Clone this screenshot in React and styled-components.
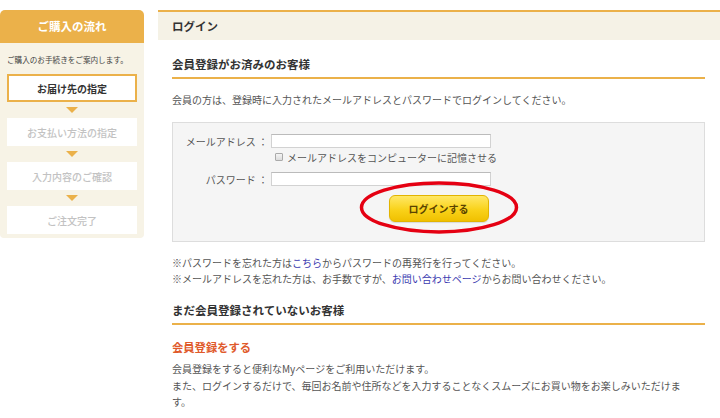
import React from "react";
import styled, { createGlobalStyle } from "styled-components";

const orange = "#ebb14a";
const cream = "#f7f3e6";

const GlobalStyle = createGlobalStyle`
  html, body {
    margin: 0;
    padding: 0;
    background: #fff;
    overflow: hidden;
  }
  body {
    font-family: "Noto Sans CJK JP", "Noto Sans", sans-serif;
    color: #555;
  }
`;

const steps = [
  { label: "お届け先の指定", active: true },
  { label: "お支払い方法の指定" },
  { label: "入力内容のご確認" },
  { label: "ご注文完了" },
];

const App = () => {
  return (
    <>
      <GlobalStyle />
      <Page>
        {/* SIDEBAR */}
        <Sidebar>
          <SidebarTitle>ご購入の流れ</SidebarTitle>
          <SidebarBody>
            <Lead>ご購入のお手続きをご案内します。</Lead>
            {steps.map((step, index) => (
              <React.Fragment key={index}>
                {index > 0 && (
                  <Arrow>
                    <span />
                  </Arrow>
                )}
                <Step $active={step.active}>{step.label}</Step>
              </React.Fragment>
            ))}
          </SidebarBody>
        </Sidebar>
        {/* SIDEBAR ENDS */}

        <Main>
          <PageTitle>ログイン</PageTitle>
          <Content>
            <SectionTitle>会員登録がお済みのお客様</SectionTitle>
            <Text>
              会員の方は、登録時に入力されたメールアドレスとパスワードでログインしてください。
            </Text>

            {/* LOGIN FORM */}
            <LoginBox>
              <FormRow>
                <Label>メールアドレス ：</Label>
                <Field type="text" />
              </FormRow>
              <CheckRow>
                <Check type="checkbox" />
                <span>メールアドレスをコンピューターに記憶させる</span>
              </CheckRow>
              <FormRow $space={6}>
                <Label>パスワード ：</Label>
                <Field type="password" />
              </FormRow>
              <ButtonRow>
                <ButtonWrap>
                  <LoginButton type="button">ログインする</LoginButton>
                  <Circle viewBox="0 0 160 54" aria-hidden="true">
                    <ellipse
                      cx="80"
                      cy="27"
                      rx="77.5"
                      ry="24.5"
                      fill="none"
                      stroke="#e50012"
                      strokeWidth="3.5"
                    />
                  </Circle>
                </ButtonWrap>
              </ButtonRow>
            </LoginBox>
            {/* LOGIN FORM ENDS */}

            <Notes>
              <li>
                ※パスワードを忘れた方は<a href="#">こちら</a>
                からパスワードの再発行を行ってください。
              </li>
              <li>
                ※メールアドレスを忘れた方は、お手数ですが、
                <a href="#">お問い合わせページ</a>からお問い合わせください。
              </li>
            </Notes>

            <SectionTitle $top={16}>まだ会員登録されていないお客様</SectionTitle>
            <SubTitle>会員登録をする</SubTitle>
            <Text $top={7} $lh={16.5} $pr={10}>
              会員登録をすると便利なMyページをご利用いただけます。
              <br />
              また、ログインするだけで、毎回お名前や住所などを入力することなくスムーズにお買い物をお楽しみいただけます。
            </Text>
          </Content>
        </Main>
      </Page>
    </>
  );
};

export default App;

let Page = styled.div`
  display: flex;
  align-items: flex-start;
  gap: 14px;
  padding-top: 10px;
  width: 720px;
`;

let Sidebar = styled.aside`
  width: 144px;
  flex-shrink: 0;
`;

let SidebarTitle = styled.h2`
  margin: 0;
  height: 33px;
  line-height: 33px;
  background: ${orange};
  border-radius: 5px 5px 0 0;
  color: #fff;
  font-size: 11.5px;
  font-weight: 700;
  text-align: center;
`;

let SidebarBody = styled.div`
  background: ${cream};
  padding: 10px 7px 4px;
  border-radius: 0 0 4px 4px;
`;

let Lead = styled.p`
  margin: 0 0 7px;
  font-size: 7.6px;
  line-height: 14px;
  color: #444;
  white-space: nowrap;
`;

let Step = styled.div`
  height: 28px;
  box-sizing: border-box;
  display: flex;
  align-items: center;
  justify-content: center;
  background: #fff;
  font-size: 10px;
  border: ${(p) => (p.$active ? `2px solid ${orange}` : "none")};
  color: ${(p) => (p.$active ? "#333" : "#c2c2c2")};
  font-weight: ${(p) => (p.$active ? 700 : 500)};
`;

let Arrow = styled.div`
  height: 16px;
  display: flex;
  align-items: center;
  justify-content: center;

  span {
    width: 0;
    height: 0;
    border-left: 6px solid transparent;
    border-right: 6px solid transparent;
    border-top: 6px solid ${orange};
  }
`;

let Main = styled.main`
  flex: 1;
  min-width: 0;
`;

let PageTitle = styled.h1`
  margin: 0;
  height: 28px;
  line-height: 28px;
  border-top: 2px solid ${orange};
  background: #f5f2e6;
  padding-left: 14px;
  font-size: 11.5px;
  font-weight: 700;
  color: #333;
`;

let Content = styled.div`
  padding: 0 15px 0 14px;
`;

let SectionTitle = styled.h3`
  margin: ${(p) => p.$top ?? 17}px 0 0;
  padding-bottom: 6px;
  border-bottom: 2px solid ${orange};
  font-size: 11.5px;
  line-height: 14px;
  font-weight: 700;
  color: #333;
`;

let SubTitle = styled.h4`
  margin: 15px 0 0;
  font-size: 11.3px;
  line-height: 14px;
  font-weight: 700;
  color: #e05a2b;
`;

let Text = styled.p`
  margin: ${(p) => p.$top ?? 13}px 0 0;
  padding-right: ${(p) => p.$pr ?? 0}px;
  font-size: 10px;
  line-height: ${(p) => p.$lh ?? 16}px;
  color: #555;
`;

let LoginBox = styled.div`
  margin-top: 14px;
  border: 1px solid #ddd;
  background: #f5f5f5;
  padding: 11px 0 19px;
`;

let FormRow = styled.div`
  display: flex;
  align-items: center;
  height: 14px;
  margin-top: ${(p) => p.$space ?? 0}px;
`;

let Label = styled.label`
  width: 95px;
  margin-right: 3px;
  text-align: right;
  font-size: 10px;
  color: #555;
  white-space: nowrap;
`;

let Field = styled.input`
  width: 220px;
  height: 14px;
  box-sizing: border-box;
  margin: 0;
  padding: 0 3px;
  border: 1px solid #d2d2d2;
  border-top-color: #bbb;
  background: #fff;
  outline: none;
`;

let CheckRow = styled.label`
  display: flex;
  align-items: center;
  gap: 4px;
  height: 18px;
  padding-left: 102px;
  font-size: 10px;
  color: #555;
  white-space: nowrap;
`;

let Check = styled.input`
  appearance: none;
  width: 8px;
  height: 8px;
  margin: 0;
  border: 1px solid #aaa;
  border-radius: 1px;
  background: linear-gradient(#f4f4f4, #dcdcdc);
`;

let ButtonRow = styled.div`
  display: flex;
  justify-content: center;
  margin-top: 9px;
`;

let ButtonWrap = styled.div`
  position: relative;
`;

let LoginButton = styled.button`
  display: block;
  width: 100px;
  height: 27px;
  border: 1px solid #e2b400;
  border-radius: 6px;
  background: linear-gradient(#ffe866, #f9d21a 55%, #f0c000);
  box-shadow: 0 1px 1px rgba(0, 0, 0, 0.12);
  font-family: inherit;
  font-size: 10px;
  font-weight: 700;
  color: #5a4300;
  cursor: pointer;
`;

let Circle = styled.svg`
  position: absolute;
  left: 50%;
  top: 50%;
  width: 160px;
  height: 54px;
  transform: translate(-50%, -53%);
  pointer-events: none;
`;

let Notes = styled.ul`
  list-style: none;
  margin: 13px 0 0;
  padding: 0;
  font-size: 10px;
  line-height: 16px;
  color: #555;

  a {
    color: #3b3bb0;
    text-decoration: none;
  }
`;
